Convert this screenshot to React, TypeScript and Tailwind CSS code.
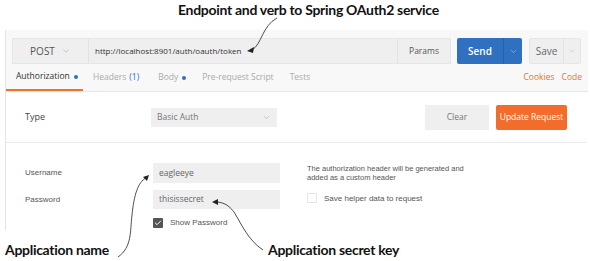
import { ChevronDown, Check } from 'lucide-react'

const ui = { fontFamily: '"Open Sans", "Liberation Sans", sans-serif' }
const arial = { fontFamily: '"Liberation Sans", Arial, sans-serif' }
const note = { fontFamily: 'Lato, "Open Sans", sans-serif' }

function Arrows() {
  return (
    <svg className="absolute inset-0 pointer-events-none" width={590} height={261}>
      <g fill="none" stroke="#222" strokeWidth={0.8}>
        <path d="M277 18 C 262 26, 262 44, 252 50" />
        <path d="M118 257 C 132 247, 130 232, 132 215 C 134 195, 138 182, 146 178" />
        <path d="M263 250 C 248 240, 242 225, 234 212 C 228 204, 222 202, 215 202" />
      </g>
      <g fill="#222">
        <path d="M247 51 L254 47 L253 53 Z" />
        <path d="M149 175 L143 177 L147 181 Z" />
        <path d="M212 202 L218 199 L218 205 Z" />
      </g>
    </svg>
  )
}

export default function App() {
  return (
    <div className="relative w-[590px] h-[261px] bg-white overflow-hidden text-[#505050]" style={ui}>
      {/* Title annotation */}
      <div className="h-[30px] pl-[178px] pt-[1px]">
        <p className="text-[14px] font-bold text-[#111] leading-[18px] tracking-[-0.3px]" style={note}>
          Endpoint and verb to Spring OAuth2 service
        </p>
      </div>

      <div className="ml-[5px] w-[583px] border-l border-[#e4e4e4]">
        {/* Request bar + tabs */}
        <div className="bg-[#f8f8f8] h-[62px] border-b border-[#e6e6e6]">
          <div className="flex items-center pt-[8px] pl-[6px] h-[34px]">
            <div className="flex h-[26px] w-[439px] bg-[#efefef] border border-[#e6e6e6]">
              <div className="w-[76px] flex items-center justify-center gap-[6px] border-r border-[#e2e2e2] text-[10px] text-[#555]">
                POST <ChevronDown size={10} strokeWidth={1.5} className="text-[#aaa]" />
              </div>
              <div className="flex-1 flex items-center pl-[6px] text-[8px] text-[#333]">
                http://localhost:8901/auth/oauth/token
              </div>
              <div className="w-[53px] flex items-center justify-center border-l border-[#e2e2e2] text-[8.5px] text-[#555]">
                Params
              </div>
            </div>
            <div className="ml-[6px] flex h-[26px] w-[65px] bg-[#2f70c0] rounded-[2px] text-white">
              <div className="w-[46px] flex items-center justify-center text-[10px] font-semibold">Send</div>
              <div className="flex-1 flex items-center justify-center border-l border-[#265fa6]">
                <ChevronDown size={9} strokeWidth={1.5} className="text-[#b8cdea]" />
              </div>
            </div>
            <div className="ml-[7px] flex h-[26px] w-[52px] bg-[#efefef] border border-[#e6e6e6] rounded-[2px]">
              <div className="w-[33px] flex items-center justify-center text-[10px] text-[#666]">Save</div>
              <div className="flex-1 flex items-center justify-center border-l border-[#e2e2e2]">
                <ChevronDown size={8} strokeWidth={1.5} className="text-[#bbb]" />
              </div>
            </div>
          </div>
          <div className="flex items-end h-[27px] text-[8.5px]">
            <div className="h-full flex items-center gap-[4px] pl-[10px] w-[77px] border-b-2 border-[#f07030] text-[#333]">
              Authorization <span className="w-[4px] h-[4px] rounded-full bg-[#2f70c0]" />
            </div>
            <div className="h-full flex items-center pl-[10px] text-[#aaa]">
              Headers <span className="ml-[3px] text-[#2f70c0]">(1)</span>
            </div>
            <div className="h-full flex items-center gap-[4px] pl-[19px] text-[#aaa]">
              Body <span className="w-[4px] h-[4px] rounded-full bg-[#2f70c0]" />
            </div>
            <div className="h-full flex items-center pl-[16px] text-[#aaa]">Pre-request Script</div>
            <div className="h-full flex items-center pl-[16px] text-[#aaa]">Tests</div>
            <div className="h-full flex items-center ml-auto pr-[6px] gap-[7px] text-[#e8742a]">
              <span>Cookies</span>
              <span>Code</span>
            </div>
          </div>
        </div>

        {/* Type row */}
        <div className="flex items-center h-[51px] border-b border-[#ebebeb] mr-[1px]">
          <div className="w-[145px] pl-[19px] text-[9px] text-[#444]">Type</div>
          <div className="w-[126px] h-[19px] bg-[#efefef] flex items-center justify-between px-[6px] text-[8.5px] text-[#777]">
            Basic Auth <ChevronDown size={9} strokeWidth={1.5} className="text-[#aaa]" />
          </div>
          <div className="ml-auto w-[64px] h-[25px] bg-[#efefef] flex items-center justify-center text-[8.5px] text-[#777]">
            Clear
          </div>
          <div className="ml-[7px] mr-[20px] w-[71px] h-[25px] bg-[#f26c2b] rounded-[2px] flex items-center justify-center text-[8.5px] text-white">
            Update Request
          </div>
        </div>

        {/* Credentials */}
        <div className="flex h-[87px] pt-[20px]">
          <div className="w-[147px] pl-[19px] text-[8px] text-[#555]" style={arial}>
            <div className="h-[20px] flex items-center">Username</div>
            <div className="h-[19px] mt-[7px] flex items-center">Password</div>
          </div>
          <div className="w-[154px]">
            <div className="w-[127px] h-[20px] bg-[#efefef] flex items-center px-[6px] text-[8.5px] text-[#666]">eagleeye</div>
            <div className="w-[127px] h-[19px] mt-[7px] bg-[#efefef] flex items-center px-[6px] text-[8.5px] text-[#666]">thisissecret</div>
            <div className="flex items-center mt-[8px] gap-[7px] text-[8px] text-[#555]" style={arial}>
              <span className="w-[10px] h-[10px] rounded-[1px] bg-[#555] flex items-center justify-center">
                <Check size={8} strokeWidth={3} className="text-white" />
              </span>
              Show Password
            </div>
          </div>
          <div className="text-[7.5px] text-[#555] leading-[9px]" style={arial}>
            <p className="pt-[1px]">The authorization header will be generated and</p>
            <p>added as a custom header</p>
            <div className="flex items-center mt-[11px] gap-[7px] text-[8px]">
              <span className="w-[10px] h-[10px] border border-[#e4e4e4] rounded-[1px] bg-white" />
              Save helper data to request
            </div>
          </div>
        </div>
      </div>

      {/* Bottom annotations */}
      <div className="flex mt-[11px] text-[14px] font-bold text-[#111] leading-[18px] tracking-[-0.3px]" style={note}>
        <span className="pl-[5px] w-[268px]">Application name</span>
        <span>Application secret key</span>
      </div>

      <Arrows />
    </div>
  )
}
